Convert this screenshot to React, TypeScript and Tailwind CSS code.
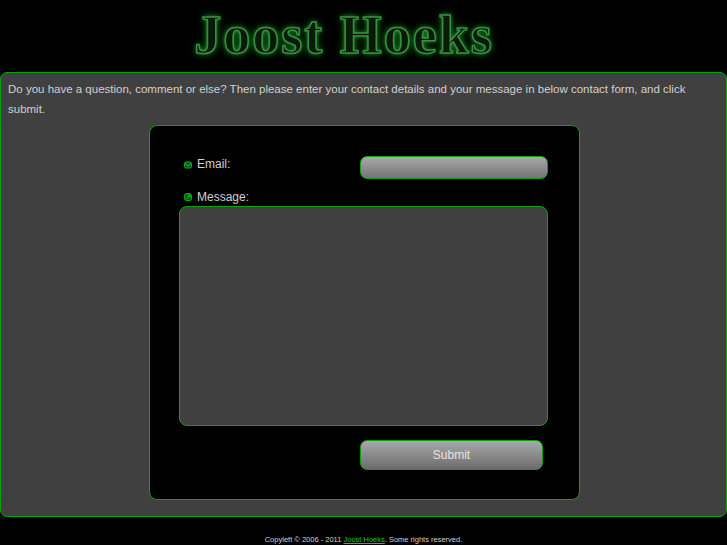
const sans = "font-['Liberation_Sans',Arial,sans-serif]";

function MailIcon() {
  return (
    <svg width="8" height="8" viewBox="0 0 8 8" className="mt-[5px] shrink-0">
      <rect x="0.5" y="1" width="7" height="6" rx="1.5" fill="#053" stroke="#10b010" />
      <path d="M1 2.5 4 4.8 7 2.5" fill="none" stroke="#14d014" strokeWidth="0.9" />
    </svg>
  );
}

function MessageIcon() {
  return (
    <svg width="8" height="8" viewBox="0 0 8 8" className="mt-[4px] shrink-0">
      <rect x="0.5" y="0.5" width="7" height="7" rx="2" fill="#052" stroke="#10b010" />
      <path d="M2 6 6 2M3.5 2H6V4.5" fill="none" stroke="#14d014" strokeWidth="1" />
    </svg>
  );
}

export default function App() {
  return (
    <div className={`${sans} flex h-[545px] w-[727px] flex-col overflow-hidden bg-black text-[#d0d0d0]`}>
      <header className="flex h-[72px] shrink-0 items-center justify-center pb-[2px] pr-[39px]">
        <h1 className="font-['Liberation_Serif',serif] text-[54px] font-bold leading-none tracking-[2px] text-[#0a1a0a] [-webkit-text-stroke:1.5px_#3c8f42] [text-shadow:0_0_4px_#1d9a2c,0_0_9px_#0f7a1c]">
          Joost Hoeks
        </h1>
      </header>

      <main className="h-[445px] shrink-0 rounded-[7px] border border-[#0fa00f] bg-[#404040] pt-[6px]">
        <p className="px-[7px] text-[11.5px] leading-[20px]">
          Do you have a question, comment or else? Then please enter your contact details and your message in below contact form, and click submit.
        </p>

        <form className="ml-[148px] mt-[6px] flex h-[375px] w-[431px] flex-col rounded-[8px] border border-[#0fa00f] bg-black pl-[29px] pt-[29px]">
          <div className="flex h-[24px] items-start">
            <label className="flex w-[181px] items-start gap-[5px] pl-[5px] pt-[1px] text-[12px] leading-[16px]">
              <MailIcon />
              Email:
            </label>
            <input className="mt-[1px] h-[23px] w-[188px] rounded-[7px] border border-[#0fa00f] bg-gradient-to-b from-[#aaaaaa] to-[#747474]" />
          </div>

          <label className="mt-[8px] flex h-[19px] items-start gap-[5px] pl-[5px] pt-[2px] text-[12px] leading-[16px]">
            <MessageIcon />
            Message:
          </label>

          <textarea className="h-[220px] w-[369px] resize-none rounded-[8px] border border-[#0fa00f] bg-[#404040]" />

          <button
            type="button"
            className="ml-[181px] mt-[14px] h-[30px] w-[183px] rounded-[7px] border border-[#0fa00f] bg-gradient-to-b from-[#aaaaaa] to-[#6c6c6c] text-[12px] text-[#e4e4e4]"
          >
            Submit
          </button>
        </form>
      </main>

      <footer className="flex flex-1 items-end justify-center text-[7.5px] leading-[10px]">
        <span>
          Copyleft © 2006 - 2011{" "}
          <a href="#" className="text-[#10d010] underline">
            Joost Hoeks
          </a>
          . Some rights reserved.
        </span>
      </footer>
    </div>
  );
}
